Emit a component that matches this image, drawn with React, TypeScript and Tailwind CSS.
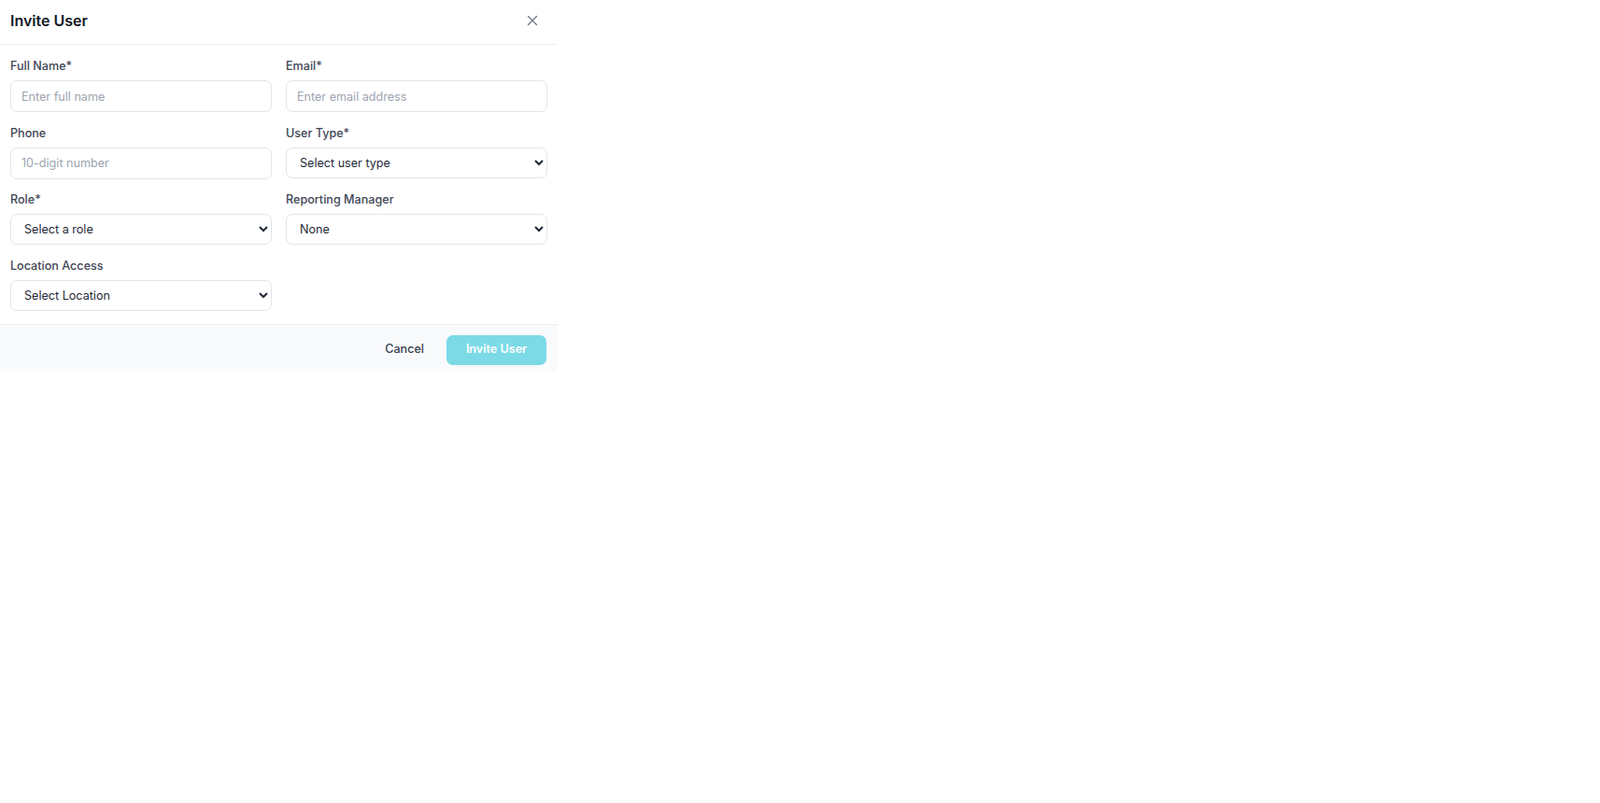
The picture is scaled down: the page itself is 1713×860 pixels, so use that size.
import React from "react";

const font = { fontFamily: "Inter, 'Liberation Sans', sans-serif" };

function Label({ children }: { children: React.ReactNode }) {
  return (
    <label className="block text-[12.6px] leading-4 font-medium text-[#3f4654] mb-[7px]">
      {children}
    </label>
  );
}

function TextInput({ placeholder }: { placeholder: string }) {
  return (
    <input
      type="text"
      placeholder={placeholder}
      className="block w-full h-[34px] rounded-[7px] border border-[#e2e4e9] bg-white px-[11px] text-[12.6px] text-[#111827] placeholder:text-[#9ca3af] outline-none"
    />
  );
}

function Select({ value, options }: { value: string; options: string[] }) {
  return (
    <select
      defaultValue={value}
      className="block w-full h-[33px] rounded-[7px] border border-[#e2e4e9] bg-white pl-[10px] pr-[8px] text-[12.6px] text-[#1f2937] outline-none"
    >
      {options.map((o) => (
        <option key={o} value={o}>
          {o}
        </option>
      ))}
    </select>
  );
}

export default function App() {
  return (
    <div className="min-h-screen bg-white" style={font}>
      <div className="w-[597px] bg-white">
        <div className="h-[48px] flex items-center justify-between pl-[11px] pr-[18px] pb-[4px] border-b border-[#eceef1]">
          <h2 className="text-[16px] font-semibold text-[#111827]">Invite User</h2>
          <button className="text-[#6b7280] flex items-center justify-center">
            <svg width="18" height="18" viewBox="0 0 24 24" fill="none" stroke="currentColor" strokeWidth="1.6" strokeLinecap="round">
              <path d="M18 6 6 18" />
              <path d="m6 6 12 12" />
            </svg>
          </button>
        </div>
        <div className="px-[11px] pt-[15px] pb-[14px] grid grid-cols-2 gap-x-[15px] gap-y-[14.5px]">
          <div>
            <Label>Full Name*</Label>
            <TextInput placeholder="Enter full name" />
          </div>
          <div>
            <Label>Email*</Label>
            <TextInput placeholder="Enter email address" />
          </div>
          <div>
            <Label>Phone</Label>
            <TextInput placeholder="10-digit number" />
          </div>
          <div>
            <Label>User Type*</Label>
            <Select value="Select user type" options={["Select user type"]} />
          </div>
          <div>
            <Label>Role*</Label>
            <Select value="Select a role" options={["Select a role"]} />
          </div>
          <div>
            <Label>Reporting Manager</Label>
            <Select value="None" options={["None"]} />
          </div>
          <div>
            <Label>Location Access</Label>
            <Select value="Select Location" options={["Select Location"]} />
          </div>
        </div>
        <div className="flex items-center justify-end gap-[11px] px-[12px] pt-[11px] pb-[7px] bg-[#f9fafb] border-t border-[#eceef1]">
          <button className="px-[13px] h-[32px] text-[12.6px] font-medium text-[#374151]">Cancel</button>
          <button className="w-[107px] h-[32px] rounded-[7px] bg-[#7bdae6] text-[12.6px] font-semibold text-white">
            Invite User
          </button>
        </div>
      </div>
    </div>
  );
}
